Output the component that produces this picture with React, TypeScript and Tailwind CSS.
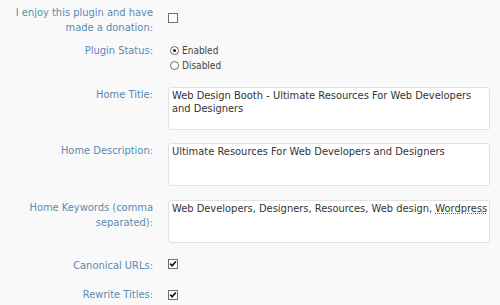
import { ReactNode } from 'react';

function Check({ checked }: { checked?: boolean }) {
  return (
    <span className="inline-block h-[10px] w-[10px] border border-[#6f6f6f] bg-white">
      {checked && (
        <svg viewBox="0 0 8 8" className="h-[8px] w-[8px]">
          <path d="M1.2 3.6 L3.2 5.8 L6.8 1.6" fill="none" stroke="#111" strokeWidth="1.6" />
        </svg>
      )}
    </span>
  );
}

function Radio({ checked }: { checked?: boolean }) {
  return (
    <span className="inline-flex h-[9px] w-[9px] items-center justify-center rounded-full border border-[#6a6a6a] bg-white">
      {checked && <span className="h-[3px] w-[3px] rounded-full bg-[#111]" />}
    </span>
  );
}

function Row({ label, className, children }: { label: ReactNode; className?: string; children: ReactNode }) {
  return (
    <div className={`flex ${className ?? ''}`}>
      <div className="w-[153px] shrink-0 text-right text-[#5b8ab0] leading-[15px]">{label}</div>
      <div className="pl-[15px] flex-1">{children}</div>
    </div>
  );
}

function Box({ children }: { children: ReactNode }) {
  return (
    <div className="h-[43px] w-[322px] rounded-[3px] border border-[#e2e2e2] bg-white px-[3px] pt-[1px] text-[#333] leading-[13px]">
      {children}
    </div>
  );
}

export default function App() {
  return (
    <div
      className="h-[305px] w-[500px] overflow-hidden bg-[#f9f9f9] pt-[5px] text-[11px]"
      style={{ fontFamily: '"DejaVu Sans Condensed", "DejaVu Sans", Verdana, sans-serif' }}
    >
      <Row label={<>I enjoy this plugin and have<br />made a donation:</>}>
        <div className="pt-[7px]"><Check /></div>
      </Row>
      <Row label="Plugin Status:" className="mt-[8px]">
        <div className="flex flex-col text-[#444] text-[10px] leading-[15px]">
          <label className="flex items-center gap-[3px] pl-[2px]"><Radio checked />Enabled</label>
          <label className="flex items-center gap-[3px] pl-[2px]"><Radio />Disabled</label>
        </div>
      </Row>
      <Row label="Home Title:" className="mt-[14px]">
        <Box>Web Design Booth - Ultimate Resources For Web Developers<br />and Designers</Box>
      </Row>
      <Row label="Home Description:" className="mt-[13px]">
        <Box>Ultimate Resources For Web Developers and Designers</Box>
      </Row>
      <Row label={<>Home Keywords (comma<br />separated):</>} className="mt-[14px]">
        <Box>
          <span className="whitespace-nowrap">
            Web Developers, Designers, Resources, Web design,{' '}
            <span className="underline decoration-dotted decoration-red-500">Wordpress</span>
          </span>
        </Box>
      </Row>
      <Row label="Canonical URLs:" className="mt-[15px]">
        <Check checked />
      </Row>
      <Row label="Rewrite Titles:" className="mt-[12px]">
        <div className="pt-[2px]"><Check checked /></div>
      </Row>
    </div>
  );
}
